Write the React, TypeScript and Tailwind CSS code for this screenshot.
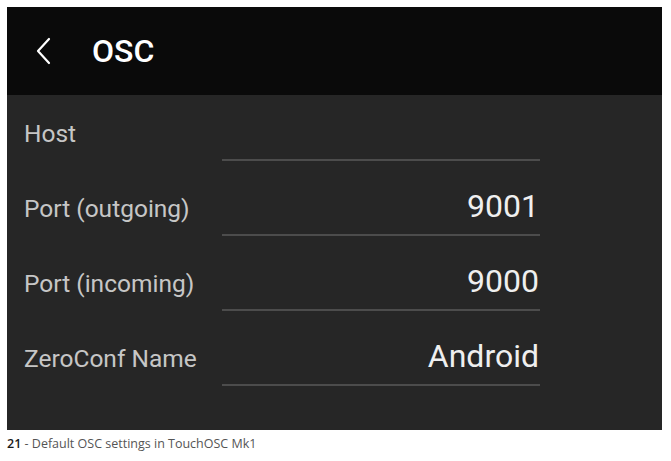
const ROWS = [
  { label: "Host", value: "", h: "h-[66px]" },
  { label: "Port (outgoing)", value: "9001", h: "h-[75px]" },
  { label: "Port (incoming)", value: "9000", h: "h-[75px]" },
  { label: "ZeroConf Name", value: "Android", h: "h-[75px]" },
];

function BackChevron() {
  return (
    <svg width="16" height="28" viewBox="0 0 16 28" fill="none" aria-hidden>
      <polyline
        points="13,2 2,14 13,26"
        stroke="#ffffff"
        strokeWidth="2.2"
        strokeLinecap="round"
        strokeLinejoin="round"
      />
    </svg>
  );
}

export default function App() {
  return (
    <div className="w-[671px] h-[461px] bg-white pl-[7px] pt-[7px]">
      {/* phone screenshot */}
      <div className="w-[655px] h-[423px] flex flex-col bg-[#262626] font-['Roboto',sans-serif]">
        <div className="h-[88px] bg-[#0a0a0a] flex items-center pl-[29px]">
          <BackChevron />
          <span className="ml-[40px] text-[32px] font-medium text-white leading-none">
            OSC
          </span>
        </div>

        <div className="flex flex-col">
          {ROWS.map((row) => (
            <div key={row.label} className={`${row.h} flex flex-col justify-end`}>
              <div className="flex items-baseline pl-[17px]">
                <span className="w-[198px] text-[24.5px] leading-none text-[#c6c6c6]">
                  {row.label}
                </span>
                <div className="w-[318px] border-b-2 border-[#4c4c4c] pb-[12px] pr-[1px] text-right text-[32px] leading-none text-[#efefef]">
                  {row.value || "\u00a0"}
                </div>
              </div>
            </div>
          ))}
        </div>
      </div>

      {/* caption */}
      <p className="mt-[6px] text-[12.5px] leading-4 text-[#555555] font-['Open_Sans',sans-serif]">
        <span className="font-semibold text-[#1a1a1a]">21</span> - Default OSC settings in TouchOSC Mk1
      </p>
    </div>
  );
}
